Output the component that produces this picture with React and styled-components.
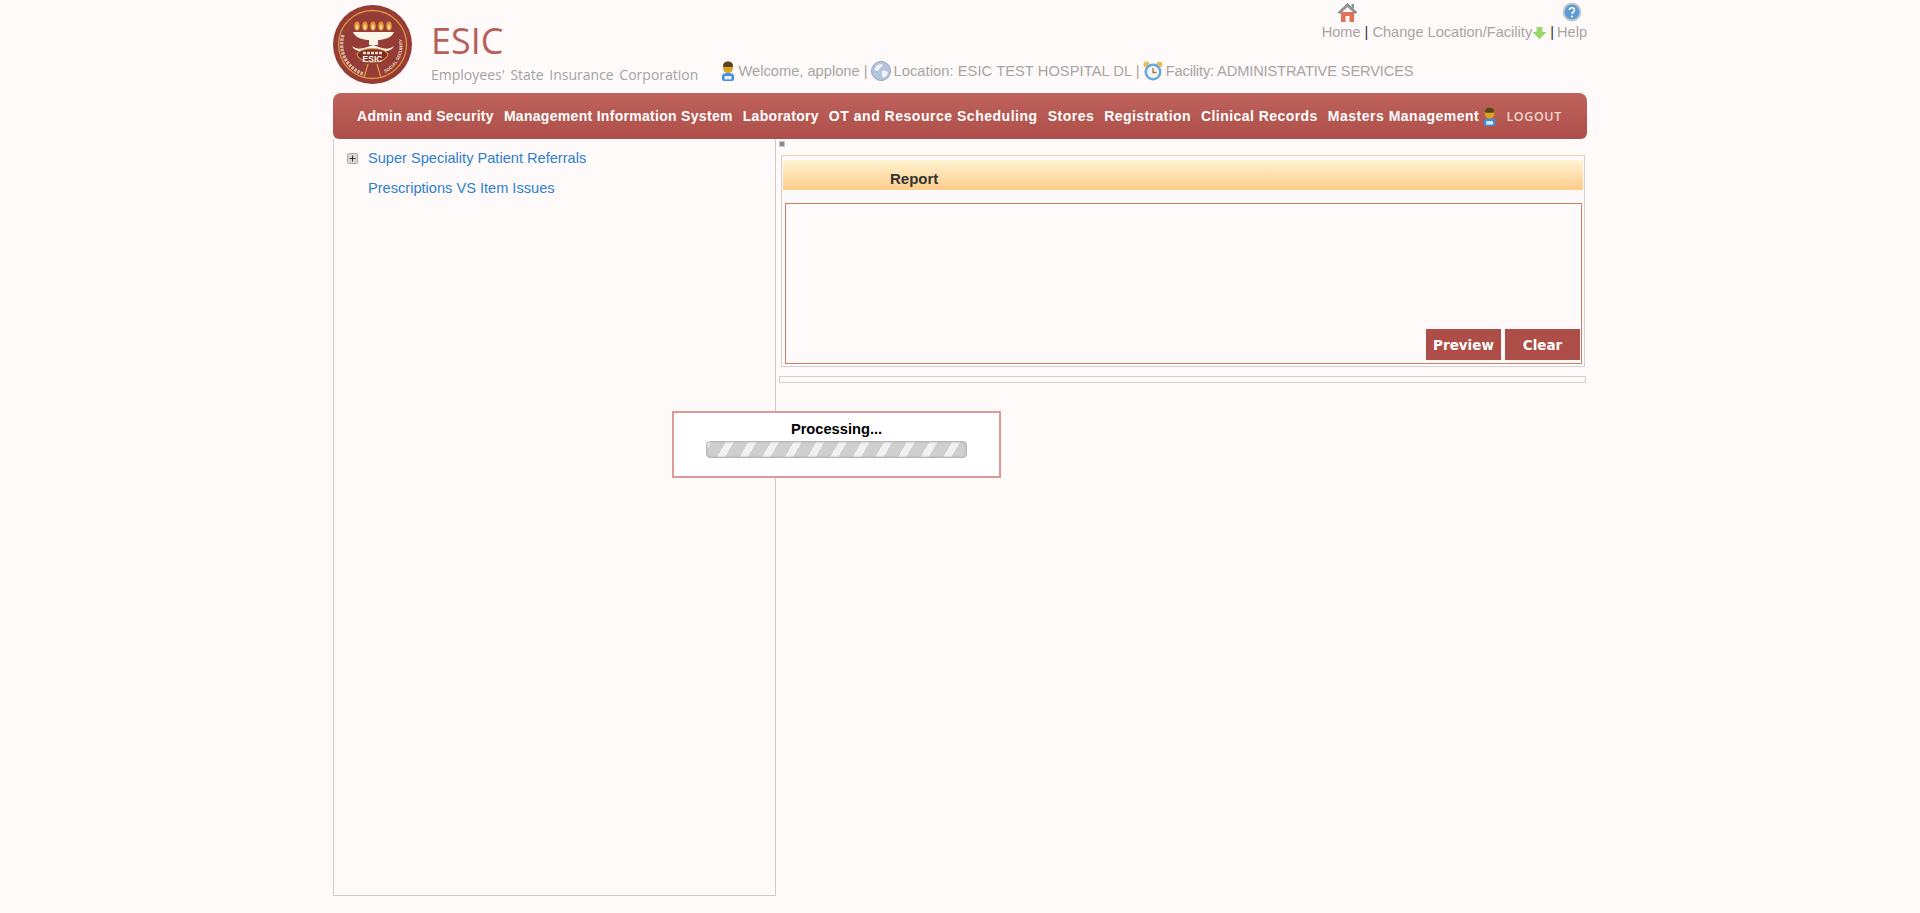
import React from 'react';
import styled, { createGlobalStyle } from 'styled-components';

const GlobalStyle = createGlobalStyle`
    html, body {
        margin: 0;
        padding: 0;
        background: #fffafa;
        font-family: "Liberation Sans", Arial, sans-serif;
    }
`;

const menuItems = [
    { label: 'Admin and Security', spacing: 0.3 },
    { label: 'Management Information System', spacing: 0.3 },
    { label: 'Laboratory', spacing: 0.3 },
    { label: 'OT and Resource Scheduling', spacing: 0.52 },
    { label: 'Stores', spacing: 0.5 },
    { label: 'Registration', spacing: 0.42 },
    { label: 'Clinical Records', spacing: 0.45 },
    { label: 'Masters Management', spacing: 0.5 },
];

const UserIcon = ({ size = 18 }) => (
    <svg width={size * 0.8} height={size} viewBox="0 0 16 20">
        <path d="M2 15c0-2 2-3 6-3s6 1 6 3v3c0 1-1 2-2 2H4c-1 0-2-1-2-2z" fill="#3f8fe0" />
        <rect x="4.5" y="15" width="7" height="3.4" fill="#e8f2fc" />
        <path d="M3 5c0-3 2-4.500 5-4.500S13 2 13 5v2c0 3-2 5-5 5S3 10 3 7z" fill="#d9a520" />
        <path d="M3 5c0-3 2-4.500 5-4.500S13 2 13 5l-1 1H4z" fill="#5b4320" />
    </svg>
);

const GlobeIcon = () => (
    <svg width="20" height="20" viewBox="0 0 20 20">
        <circle cx="10" cy="10" r="9.500" fill="#b4c4dc" stroke="#93a4bd" />
        <path d="M3.500 8c2-4 5-5.500 8-4.500 1 2-2 2.500-3 4.500s-3 3-5 0zM11 10c3-1 5 0 6 2-1 3-3 4.500-5.500 4.500 0-2-1.500-4.500-.5-6.500z" fill="#f2f5f9" />
    </svg>
);

const ClockIcon = () => (
    <svg width="20" height="20" viewBox="0 0 20 20">
        <circle cx="3.500" cy="3.500" r="3" fill="#e8bd5c" />
        <circle cx="16.500" cy="3.500" r="3" fill="#e8bd5c" />
        <circle cx="10" cy="11" r="8.500" fill="#6ea6dc" />
        <circle cx="10" cy="11" r="6" fill="#f2f6fb" />
        <path d="M10 7v4.500h3.500" fill="none" stroke="#b5763a" strokeWidth="1.400" />
    </svg>
);

const HomeIcon = () => (
    <svg width="21" height="20" viewBox="0 0 21 20">
        <path d="M4 10h13v10H4z" fill="#e2705a" />
        <path d="M8.500 14h4v6h-4z" fill="#fff2ea" />
        <path d="M0.500 10.500 10.500 1 20.500 10.500 18 12 10.500 5 3 12z" fill="#8f8f8f" />
        <path d="M14.500 2h2.500v5l-2.500-2z" fill="#8f8f8f" />
    </svg>
);

const HelpIcon = () => (
    <svg width="20" height="20" viewBox="0 0 20 20">
        <circle cx="10" cy="10" r="9.500" fill="#c9c9c9" />
        <circle cx="10" cy="10" r="7.500" fill="#5b9ad2" />
        <path d="M7.500 8c0-3 5-3 5 0 0 2-2.500 2-2.500 4" fill="none" stroke="#fff" strokeWidth="1.700" />
        <circle cx="10" cy="14.500" r="1.100" fill="#fff" />
    </svg>
);

const ArrowIcon = () => (
    <svg width="15" height="14" viewBox="0 0 15 14">
        <path d="M4.500 1h6v5h4l-7 7.500L0.500 6h4z" fill="#9ad56e" />
    </svg>
);

const PlusIcon = () => (
    <svg width="11" height="11" viewBox="0 0 11 11">
        <rect x="0.500" y="0.500" width="10" height="10" rx="1" fill="#d9d6d6" stroke="#aeaaaa" />
        <path d="M2.500 5.500h6M5.500 2.500v6" stroke="#3a3030" strokeWidth="1" />
    </svg>
);

const Logo = () => (
    <svg width="79" height="79" viewBox="0 0 79 79">
        <defs>
            <path id="sealRight" d="M52 68A31 31 0 0 0 69 34" />
        </defs>
        <circle cx="39.500" cy="39.500" r="39.500" fill="#943c35" />
        <circle cx="39.500" cy="39.500" r="34" fill="none" stroke="#dc9440" strokeWidth="1.300" />
        {[24, 32, 40, 48, 56].map((x) => (
            <g key={x}>
                <ellipse cx={x} cy="21" rx="2.800" ry="4.500" fill="#e8912f" />
                <ellipse cx={x} cy="22" rx="1.300" ry="2.500" fill="#fbe7a8" />
            </g>
        ))}
        <path d="M20 27H61C59 33 50 35 45 35V40H36V35C31 35 22 33 20 27Z" fill="#fdf6e8" />
        <path d="M19 41C25 46 32 43 40 40 48 43 55 46 61 41 59 46 52 47 48 45H32C28 47 21 46 19 41Z" fill="#fdf6e8" />
        <path d="M24 49C28 42 51 42 55 49 53 60 26 60 24 49Z" fill="#7e2e28" stroke="#dc9440" strokeWidth="1.200" />
        <path d="M30 48h19" stroke="#f3dcc4" strokeWidth="2.500" strokeDasharray="3 1" />
        <SealText x="39.500" y="56.500" textAnchor="middle">ESIC</SealText>
        <path d="M35 59 31 73M44 59 48 73" stroke="#dc9440" strokeWidth="1.300" />
        <path d="M10 30A31 31 0 0 0 31 69" fill="none" stroke="#f0d6c0" strokeWidth="3.500" strokeDasharray="2.500 1" opacity="0.75" />
        <SealSmall><textPath href="#sealRight">SOCIAL SECURITY</textPath></SealSmall>
    </svg>
);

const App = () => {
    return (
        <Page>
            <GlobalStyle />
            <Header>
                <Logo />
                <Brand>
                    <BrandName>ESIC</BrandName>
                    <BrandSub>Employees' State Insurance Corporation</BrandSub>
                </Brand>
                <HeaderRight>
                    <TopLinks>
                        <TopLink $iconShift={12}>
                            <HomeIcon />
                            <TopLinkLabel>Home</TopLinkLabel>
                        </TopLink>
                        <Sep $wide>|</Sep>
                        <TopLinkLabel>Change Location/Facility</TopLinkLabel>
                        <Arrow><ArrowIcon /></Arrow>
                        <Sep>|</Sep>
                        <TopLink>
                            <HelpIcon />
                            <TopLinkLabel>Help</TopLinkLabel>
                        </TopLink>
                    </TopLinks>
                    <UserRow>
                        <UserIcon size={20} />
                        <UserText>Welcome, applone |</UserText>
                        <GlobeIcon />
                        <UserText $spacing={0.07}>Location: ESIC TEST HOSPITAL DL |</UserText>
                        <ClockIcon />
                        <UserText $spacing={-0.15}>Facility: ADMINISTRATIVE SERVICES</UserText>
                    </UserRow>
                </HeaderRight>
            </Header>
            <Nav>
                {menuItems.map((item) => (
                    <NavItem key={item.label} $spacing={item.spacing}>{item.label}</NavItem>
                ))}
                <LogoutGroup>
                    <UserIcon size={19} />
                    <Logout>LOGOUT</Logout>
                </LogoutGroup>
            </Nav>
            <Main>
                <Tree>
                    <TreeRow>
                        <PlusIcon />
                        <TreeLink>Super Speciality Patient Referrals</TreeLink>
                    </TreeRow>
                    <TreeRow $leaf>
                        <TreeLink>Prescriptions VS Item Issues</TreeLink>
                    </TreeRow>
                </Tree>
                <Content>
                    <Collapse />
                    <ReportBox>
                        <ReportHead>Report</ReportHead>
                        <Fieldset>
                            <Button>Preview</Button>
                            <Button>Clear</Button>
                        </Fieldset>
                    </ReportBox>
                    <ResultBar />
                </Content>
            </Main>
            <Processing>
                <ProcessingText>Processing...</ProcessingText>
                <Progress />
            </Processing>
        </Page>
    );
}

const Page = styled.div`
    position: relative;
    width: 1254px;
    margin: 0 auto;
`;

const SealText = styled.text`
    font-family: "Liberation Sans", sans-serif;
    font-weight: bold;
    font-size: 8.5px;
    fill: #fdf6e8;
`;

const SealSmall = styled.text`
    font-family: "Liberation Sans", sans-serif;
    font-size: 4.5px;
    font-weight: bold;
    fill: #f3dcc4;
`;

const Header = styled.div`
    height: 93px;
    padding-top: 5px;
    box-sizing: border-box;
    display: flex;
`;

const Brand = styled.div`
    margin-left: 19px;
    width: 287px;
    color: #9a9a9a;
    font-family: "Open Sans", sans-serif;
`;

const BrandName = styled.div`
    margin-top: 14px;
    height: 44px;
    line-height: 44px;
    font-size: 36px;
    color: #b95f5b;
`;

const BrandSub = styled.div`
    margin-top: 3px;
    font-size: 14px;
    line-height: 18px;
    word-spacing: 2px;
    color: #a3a3a3;
    white-space: nowrap;
`;

const HeaderRight = styled.div`
    flex: 1;
    display: flex;
    flex-direction: column;
    align-items: stretch;
`;

const TopLinks = styled.div`
    display: flex;
    justify-content: flex-end;
    align-items: flex-end;
    gap: 3px;
    height: 38px;
    margin-top: -3px;
    font-size: 14.6px;
    color: #a8a4a4;
`;

const TopLink = styled.div`
    display: flex;
    flex-direction: column;
    align-items: center;

    svg {
        margin-left: ${props => props.$iconShift || 0}px;
        margin-bottom: 2px;
    }
`;

const TopLinkLabel = styled.span`
    line-height: 16px;
`;

const Arrow = styled.span`
    display: flex;
    margin-left: -3px;
`;

const Sep = styled.span`
    color: #333;
    line-height: 16px;
    margin: ${props => props.$wide ? '0 1px' : '0'};
`;

const UserRow = styled.div`
    margin: 20px 0 0 1.500px;
    display: flex;
    align-items: center;
    gap: 3px;
    height: 22px;
    font-size: 14.67px;
    color: #a8a4a4;
    white-space: nowrap;
`;

const UserText = styled.span`
    letter-spacing: ${props => props.$spacing || 0}px;
`;

const Nav = styled.div`
    height: 46px;
    box-sizing: border-box;
    padding-left: 24px;
    display: flex;
    align-items: center;
    gap: 10px;
    border-radius: 8px 8px 6px 6px;
    background: linear-gradient(to bottom, #bf635c, #ae4e49);
`;

const NavItem = styled.div`
    color: #fff;
    font-size: 14px;
    font-weight: bold;
    letter-spacing: ${props => props.$spacing}px;
    white-space: nowrap;
`;

const LogoutGroup = styled.div`
    margin-left: -7px;
    display: flex;
    align-items: center;
    gap: 9px;
`;

const Logout = styled.div`
    font-family: "Open Sans", sans-serif;
    font-size: 12.500px;
    font-weight: 600;
    letter-spacing: 0.6px;
    color: #f0d6d2;
`;

const Main = styled.div`
    display: flex;
    height: 757px;
`;

const Tree = styled.div`
    width: 443px;
    box-sizing: border-box;
    border: 1px solid #ccc;
    border-top: 0;
    padding-top: 4px;
`;

const TreeRow = styled.div`
    display: flex;
    align-items: center;
    gap: 10px;
    height: 30px;
    padding-left: ${props => props.$leaf ? '34px' : '13px'};
`;

const TreeLink = styled.span`
    font-size: 14.6px;
    color: #2f7fd0;
`;

const Content = styled.div`
    width: 807px;
    margin-left: 3px;
    padding-top: 2px;
    position: relative;
`;

const Collapse = styled.div`
    width: 6px;
    height: 6px;
    margin-bottom: 8px;
    background: #8a8a8a;
    border: 1px solid #c8c8c8;
    box-sizing: border-box;
`;

const ReportBox = styled.div`
    margin-left: 2px;
    width: 804px;
    height: 212px;
    box-sizing: border-box;
    border: 1px solid #d5d0cf;
    border-top-color: #f3cfa0;
    padding: 1px;
    background: #fffafa;
`;

const ReportHead = styled.div`
    height: 30px;
    margin-top: 3px;
    box-sizing: border-box;
    padding: 10px 0 0 107px;
    font-size: 15px;
    line-height: 18px;
    font-weight: bold;
    color: #333;
    background: linear-gradient(to bottom, #fff4d2, #ffcb8a);
`;

const Fieldset = styled.div`
    height: 161px;
    margin: 13px 1px 0 2px;
    box-sizing: border-box;
    border: 1px solid #d17a68;
    padding: 0 1px 3px 0;
    display: flex;
    justify-content: flex-end;
    align-items: flex-end;
    gap: 4px;
`;

const Button = styled.div`
    width: 75px;
    height: 31px;
    background: #ad4e48;
    color: #fff;
    font-family: "DejaVu Sans", sans-serif;
    font-size: 13.500px;
    font-weight: bold;
    display: flex;
    align-items: center;
    justify-content: center;
`;

const ResultBar = styled.div`
    width: 807px;
    height: 7px;
    margin-top: 9px;
    box-sizing: border-box;
    border: 1px solid #d5d0cf;
`;

const Processing = styled.div`
    position: absolute;
    left: 339px;
    top: 411px;
    width: 329px;
    height: 67px;
    box-sizing: border-box;
    border: 2px solid #dd9a94;
    background: #fff;
    display: flex;
    flex-direction: column;
    align-items: center;
`;

const ProcessingText = styled.div`
    margin-top: 7px;
    font-size: 14.67px;
    line-height: 18px;
    font-weight: bold;
    color: #000;
`;

const Progress = styled.div`
    margin-top: 3px;
    width: 261px;
    height: 17px;
    box-sizing: border-box;
    border: 1px solid #b8b8b8;
    border-radius: 4px;
    box-shadow: inset 0 0 2px #a8a8a8;
    background: repeating-linear-gradient(-60deg, #cfcfcf 0 12.6px, #f1f1f1 12.6px 19.6px);
`;

export default App;
